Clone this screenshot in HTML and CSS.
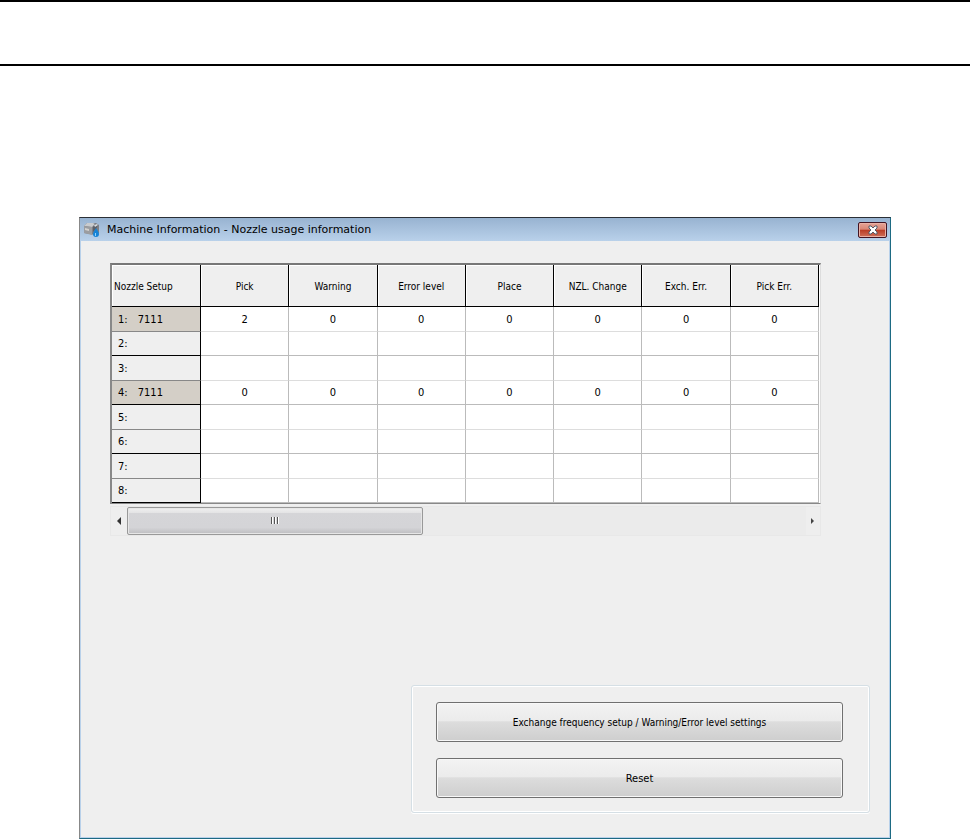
FILE: index.html
```html
<!DOCTYPE html>
<html lang="en">
<head>
<meta charset="utf-8">
<title>Machine Information - Nozzle usage information</title>
<link rel="stylesheet" href="styles.css">
</head>
<body>
<header class="page-rule"></header>
<main class="window">
  <div class="titlebar">
    <svg class="app-icon" width="16" height="16" viewBox="0 0 16 16" aria-hidden="true">
      <path d="M0 4 3 1h9l3 2v8l-4 2-11-2z" fill="#7d7f84"/>
      <path d="M0 4 3 1h6l2 1-3 3z" fill="#c9cbce"/>
      <path d="M0 4l8 1v8l-8-2z" fill="#9b9da1"/>
      <path d="M1 6l4 1v2L1 8z" fill="#d4d2cf"/>
      <path d="M9 5l2-3 3 1-2 4-3 3z" fill="#5a5f69"/>
      <path d="M10 3l3-1 1 1-3 2z" fill="#d9dbde"/>
      <path d="M12 6c1 2 3 4 3 6a3 3 0 0 1-6 0c0-2 2-4 3-6z" fill="#1683d6"/>
      <path d="M11 11h1v3h-1z" fill="#8fd0fa"/>
    </svg>
    <h1 class="title">Machine Information - Nozzle usage information</h1>
    <button class="close" type="button" aria-label="Close">
      <svg width="12" height="10" viewBox="0 0 12 10" aria-hidden="true">
        <path d="M2 1h2l2 2 2-2h2v2L8 5l2 2v2H8L6 7 4 9H2V7l2-2-2-2z" fill="#fff" stroke="#555b68"/>
      </svg>
    </button>
  </div>
  <div class="content">
    <section class="grid-area">
      <div class="grid-frame">
        <table class="grid">
          <thead>
            <tr><th scope="col" class="corner">Nozzle Setup</th><th scope="col">Pick</th><th scope="col">Warning</th><th scope="col">Error level</th><th scope="col">Place</th><th scope="col">NZL. Change</th><th scope="col">Exch. Err.</th><th scope="col">Pick Err.</th></tr>
          </thead>
          <tbody>
            <tr><th scope="row" class="used">1: <span class="nozzle">7111</span></th><td>2</td><td>0</td><td>0</td><td>0</td><td>0</td><td>0</td><td>0</td></tr>
            <tr><th scope="row">2:</th><td></td><td></td><td></td><td></td><td></td><td></td><td></td></tr>
            <tr><th scope="row">3:</th><td></td><td></td><td></td><td></td><td></td><td></td><td></td></tr>
            <tr><th scope="row" class="used">4: <span class="nozzle">7111</span></th><td>0</td><td>0</td><td>0</td><td>0</td><td>0</td><td>0</td><td>0</td></tr>
            <tr><th scope="row">5:</th><td></td><td></td><td></td><td></td><td></td><td></td><td></td></tr>
            <tr><th scope="row">6:</th><td></td><td></td><td></td><td></td><td></td><td></td><td></td></tr>
            <tr><th scope="row">7:</th><td></td><td></td><td></td><td></td><td></td><td></td><td></td></tr>
            <tr><th scope="row">8:</th><td></td><td></td><td></td><td></td><td></td><td></td><td></td></tr>
          </tbody>
        </table>
      </div>
      <div class="scrollbar">
        <button class="arrow" type="button" aria-label="Scroll left">
          <svg width="5" height="8" viewBox="0 0 5 8" aria-hidden="true"><path d="M4 0v8L0 4z" fill="#333"/></svg>
        </button>
        <div class="track">
          <button class="thumb" type="button" aria-label="Scroll position">
            <svg width="10" height="8" viewBox="0 0 10 8" aria-hidden="true">
              <path d="M1 0h2v7H1zM4 0h2v7H4zM7 0h2v7H7z" fill="#fff"/>
              <path d="M1 0h1v7H1zM4 0h1v7H4zM7 0h1v7H7z" fill="#555"/>
            </svg>
          </button>
        </div>
        <button class="arrow arrow-right" type="button" aria-label="Scroll right">
          <svg width="4" height="6" viewBox="0 0 4 6" aria-hidden="true"><path d="M0 0v6l3-3z" fill="#444"/></svg>
        </button>
      </div>
    </section>
    <section class="actions">
      <button class="action" type="button">Exchange frequency setup / Warning/Error level settings</button>
      <button class="action reset" type="button">Reset</button>
    </section>
  </div>
</main>
</body>
</html>
```
FILE: styles.css
```css
* { box-sizing: border-box; }

body {
  margin: 0;
  background: #fff;
  color: #000;
  font-family: "DejaVu Sans Condensed", "DejaVu Sans", sans-serif;
  font-size: 10px;
}

button {
  font: inherit;
  color: inherit;
  padding: 0;
}

.page-rule {
  height: 66px;
  border-top: 2px solid #000;
  border-bottom: 2px solid #000;
}

.window {
  margin: 151px 79px 0;
  background: #efefef;
  border: 1px solid #888;
  border-top-color: #2b2f36;
  border-right-color: #1d6a83;
  border-bottom-color: #1d6a83;
}

.titlebar {
  display: flex;
  align-items: center;
  height: 23px;
  padding: 0 3px 0 4px;
  background: linear-gradient(#98b3d1, #b9d1ea);
}

.title {
  flex: 1;
  margin: 0 0 0 7px;
  font-family: "DejaVu Sans", sans-serif;
  font-size: 11px;
  font-weight: normal;
  line-height: 15px;
}

.close {
  display: flex;
  align-items: center;
  justify-content: center;
  width: 29px;
  height: 16px;
  border: 1px solid #431422;
  border-radius: 2px;
  background: linear-gradient(#e6a497 0, #d98675 45%, #b93b24 50%, #d0705a 100%);
  box-shadow: inset 0 0 0 1px #e9b0a5;
}

.content {
  border: 1px solid #b9d1ea;
  border-top: 0;
  padding: 22px 19px 24px 29px;
}

.grid-area { margin-right: 49px; }

.grid-frame {
  padding-right: 1px;
  border: 2px solid #777;
  border-left-color: #888;
  border-right: 1px solid #ddd;
  border-bottom: 1px solid #888;
  background: #fff;
}

.grid {
  width: 100%;
  table-layout: fixed;
  border-collapse: separate;
  border-spacing: 0;
}

.grid th,
.grid td {
  padding: 0;
  font-weight: normal;
  text-align: center;
}

.grid thead th {
  height: 42px;
  padding-top: 1px;
  background: #efefef;
  border-right: 1px solid #000;
  border-bottom: 1px solid #000;
  box-shadow: inset 1px 1px #fff;
}

.grid thead .corner {
  width: 89px;
  padding-left: 2px;
  text-align: left;
}

.grid tbody tr { height: 25px; }
.grid tbody tr:nth-child(even) { height: 24px; }

.grid td {
  border-right: 1px solid #bbb;
  border-bottom: 1px solid #ddd;
}

.grid tr:nth-child(even) td { border-bottom-color: #bbb; }

.grid tbody th {
  padding-left: 6px;
  text-align: left;
  background: #efefef;
  border-right: 1px solid #000;
  border-bottom: 1px solid #888;
}

.grid tbody th,
.grid td { font-size: 11px; }

.grid tbody tr:nth-child(even) th { border-bottom-color: #000; }
.grid tbody th.used { background: #d4cfc7; }
.nozzle { margin-left: 7px; }

.scrollbar {
  display: flex;
  height: 30px;
  margin-top: 2px;
  background: #ebebeb;
  border: 1px solid #e8e8e8;
}

.arrow {
  display: flex;
  align-items: center;
  justify-content: center;
  width: 16px;
  border: 0;
  background: #eee;
}

.arrow-right { width: 14px; }

.track { flex: 1; }

.thumb {
  display: flex;
  align-items: center;
  justify-content: center;
  width: 43%;
  min-width: 296px;
  height: 28px;
  border: 1px solid #999;
  border-radius: 2px;
  background: linear-gradient(#f0f0f0 0, #e4e4e5 18%, #d5d5d8 19%, #d4d4d7 75%, #bdbdc0 100%);
  box-shadow: inset 0 0 0 1px #e6e6e6;
}

.actions {
  display: flex;
  flex-direction: column;
  gap: 16px;
  margin: 149px 0 0 301px;
  padding: 16px 26px 14px 24px;
  border: 1px solid #d5dfe5;
  border-radius: 3px;
  box-shadow: inset 0 0 0 1px #fff, 0 1px #fff;
}

.action {
  height: 40px;
  border: 1px solid #707070;
  border-radius: 3px;
  background: linear-gradient(#f3f3f3 0, #ebebeb 48%, #dddddd 49%, #cecece 100%);
  box-shadow: inset 0 0 0 1px #f8f8f8;
}

.reset { font-size: 11px; }
```
